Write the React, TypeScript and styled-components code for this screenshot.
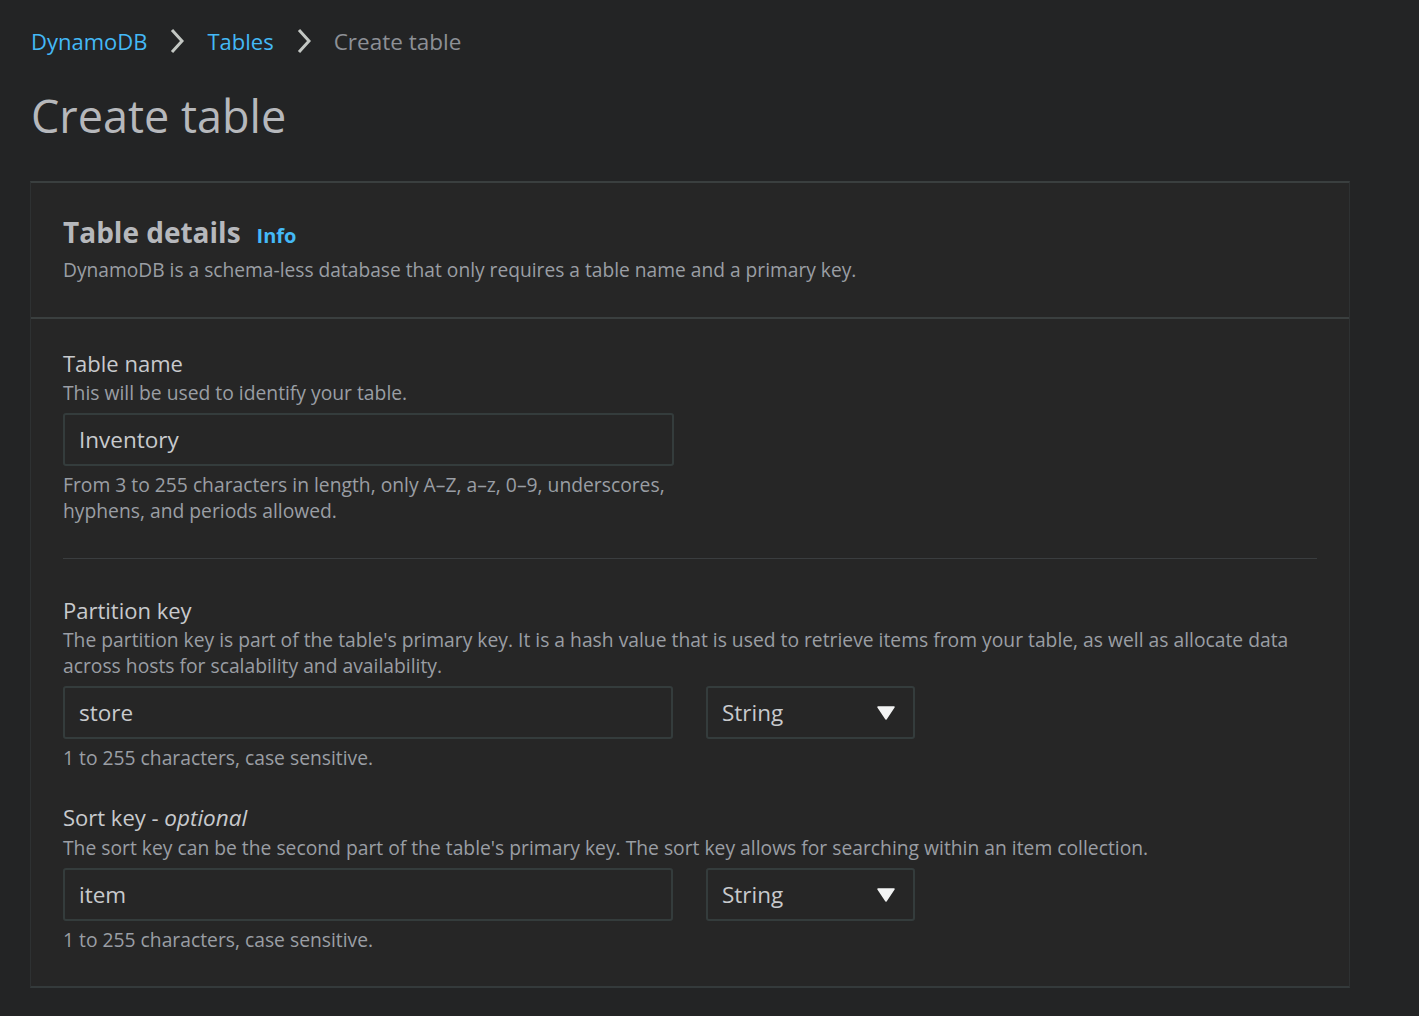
import React from "react";
import styled, { createGlobalStyle } from "styled-components";

const Global = createGlobalStyle`
  html, body { margin: 0; padding: 0; background: #232425; }
  body { font-family: "Open Sans", "Noto Sans", sans-serif; color: #d1d5db; }
`;

const Page = styled.div`
  padding: 22px 69px 28px 30px;
  min-height: 1016px;
  box-sizing: border-box;
`;

const Crumbs = styled.nav`
  display: flex;
  align-items: center;
  gap: 23px;
  font-size: 22px;
  height: 38px;
  padding-left: 1px;
`;

const Crumb = styled.span<{ $current?: boolean }>`
  color: ${(p) => (p.$current ? "#8d9096" : "#44b9f6")};
  font-size: ${(p) => (p.$current ? "22.5px" : "22px")};
`;

const Title = styled.h1`
  margin: 28px 0 0 1px;
  font-size: 45px;
  font-weight: 400;
  color: #b6b8bc;
  line-height: 56px;
`;

const Card = styled.section`
  margin-top: 37px;
  background: #262626;
  border: 1px solid #2e3132;
  border-top: 2px solid #3a3f3f;
  border-bottom: 2px solid #343a3b;
`;

const CardHeader = styled.div`
  padding: 29px 32px 34px;
  border-bottom: 2px solid #3a3f3f;
`;

const HeadRow = styled.div`
  display: flex;
  align-items: baseline;
  gap: 16px;
`;

const H2 = styled.h2`
  margin: 0;
  font-size: 28px;
  font-weight: 700;
  color: #b6b8bc;
  line-height: 40px;
`;

const InfoLink = styled.span`
  color: #44b9f6;
  font-weight: 700;
  font-size: 20px;
`;

const Desc = styled.p`
  margin: 5px 0 0;
  font-size: 19.2px;
  color: #9a9ea4;
  line-height: 26px;
`;

const CardBody = styled.div`
  padding: 29px 32px 33px;
`;

const Field = styled.div<{ $gap?: number }>`
  margin-top: ${(p) => p.$gap ?? 0}px;
`;

const Label = styled.div`
  font-size: 22px;
  color: #c8cacd;
  line-height: 30px;
`;

const Optional = styled.em`
  font-style: italic;
  font-size: 22.5px;
`;

const Help = styled.div`
  margin-top: 2px;
  font-size: 19.3px;
  color: #9a9ea4;
  line-height: 26px;
`;

const Row = styled.div`
  display: flex;
  gap: 33px;
  margin: 7px 0 6px;
`;

const Input = styled.div<{ $w: number }>`
  width: ${(p) => p.$w}px;
  height: 53px;
  box-sizing: border-box;
  border: 2px solid #343c3c;
  border-radius: 3px;
  display: flex;
  align-items: center;
  padding: 0 14px;
  font-size: 22.5px;
  color: #c8cacd;
`;

const Select = styled(Input)`
  justify-content: space-between;
  padding-right: 18px;
`;

const Constraint = styled.div`
  font-size: 19.3px;
  color: #9a9ea4;
  line-height: 26px;
  max-width: 620px;
`;

const Divider = styled.hr`
  border: none;
  border-top: 1px solid #3a3d3f;
  margin: 34px 0 36px;
`;

const Caret = () => (
  <svg width="18" height="14" viewBox="0 0 18 14">
    <path d="M1 1 H17 L9 13 Z" fill="#f2f3f3" stroke="#f2f3f3" strokeWidth="1.5" strokeLinejoin="round" />
  </svg>
);

const Chevron = () => (
  <svg width="14" height="26" viewBox="0 0 14 26">
    <path d="M2 2 L12 13 L2 24" fill="none" stroke="#c3c7c3" strokeWidth="3" />
  </svg>
);

export default function App() {
  return (
    <>
      <Global />
      <Page>
        <Crumbs>
          <Crumb>DynamoDB</Crumb>
          <Chevron />
          <Crumb>Tables</Crumb>
          <Chevron />
          <Crumb $current>Create table</Crumb>
        </Crumbs>
        <Title>Create table</Title>
        <Card>
          <CardHeader>
            <HeadRow>
              <H2>Table details</H2>
              <InfoLink>Info</InfoLink>
            </HeadRow>
            <Desc>DynamoDB is a schema-less database that only requires a table name and a primary key.</Desc>
          </CardHeader>
          <CardBody>
            <Field>
              <Label>Table name</Label>
              <Help>This will be used to identify your table.</Help>
              <Row>
                <Input $w={611}>Inventory</Input>
              </Row>
              <Constraint>From 3 to 255 characters in length, only A–Z, a–z, 0–9, underscores, hyphens, and periods allowed.</Constraint>
            </Field>
            <Divider />
            <Field>
              <Label>Partition key</Label>
              <Help>
                The partition key is part of the table's primary key. It is a hash value that is used to retrieve items from your table, as well as allocate data across hosts for scalability and availability.
              </Help>
              <Row>
                <Input $w={610}>store</Input>
                <Select $w={209}>
                  String
                  <Caret />
                </Select>
              </Row>
              <Constraint>1 to 255 characters, case sensitive.</Constraint>
            </Field>
            <Field $gap={31}>
              <Label>
                Sort key - <Optional>optional</Optional>
              </Label>
              <Help>The sort key can be the second part of the table's primary key. The sort key allows for searching within an item collection.</Help>
              <Row>
                <Input $w={610}>item</Input>
                <Select $w={209}>
                  String
                  <Caret />
                </Select>
              </Row>
              <Constraint>1 to 255 characters, case sensitive.</Constraint>
            </Field>
          </CardBody>
        </Card>
      </Page>
    </>
  );
}
